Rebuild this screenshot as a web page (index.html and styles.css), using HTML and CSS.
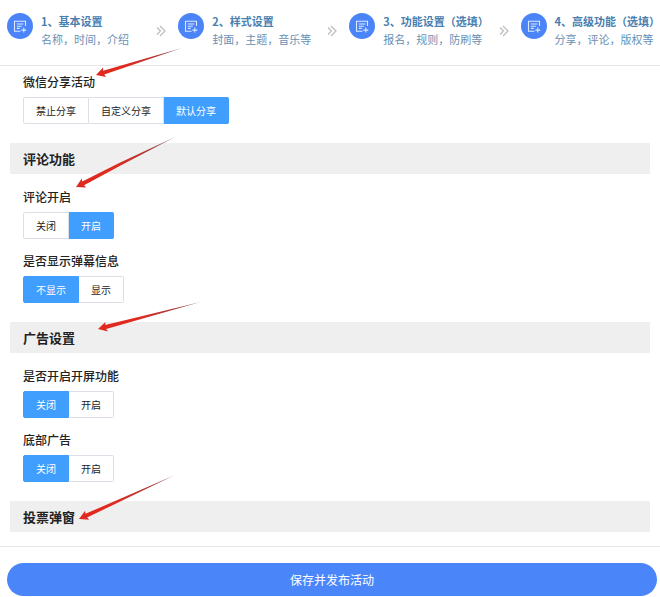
FILE: index.html
```html
<!DOCTYPE html>
<html lang="zh-CN">
<head>
    <meta charset="UTF-8">
    <meta name="viewport" content="width=device-width, initial-scale=1.0">
    <title>高级功能</title>
    <link rel="stylesheet" href="styles.css">
</head>
<body>

    <svg class="defs" width="0" height="0" aria-hidden="true">
        <symbol id="icon-form" viewBox="0 0 26 26">
            <path d="M18.5 13V8.2H7.5v10h6" />
            <path d="M9.8 11h6.6M9.8 13.2h5M9.8 15.4h3M16.8 14.6v5M14.3 17.1h5" />
        </symbol>
        <symbol id="icon-next" viewBox="0 0 10 12">
            <path d="M1 2.5l3.5 3.5L1 9.5M4 1l5 5-5 5" />
        </symbol>
    </svg>

    <nav class="steps">
        <a class="step" href="#">
            <svg class="step-icon"><use href="#icon-form"/></svg>
            <span class="step-text"><b>1、基本设置</b><span>名称，时间，介绍</span></span>
            <svg class="step-next"><use href="#icon-next"/></svg>
        </a>
        <a class="step" href="#">
            <svg class="step-icon"><use href="#icon-form"/></svg>
            <span class="step-text"><b>2、样式设置</b><span>封面，主题，音乐等</span></span>
            <svg class="step-next"><use href="#icon-next"/></svg>
        </a>
        <a class="step" href="#">
            <svg class="step-icon"><use href="#icon-form"/></svg>
            <span class="step-text"><b>3、功能设置（选填）</b><span>报名，规则，防刷等</span></span>
            <svg class="step-next"><use href="#icon-next"/></svg>
        </a>
        <a class="step step-last" href="#">
            <svg class="step-icon"><use href="#icon-form"/></svg>
            <span class="step-text"><b>4、高级功能（选填）</b><span>分享，评论，版权等</span></span>
        </a>
    </nav>

    <form class="form">
        <div class="group">
            <fieldset class="field">
                <legend>微信分享活动</legend>
                <div class="radios">
                    <label><input type="radio" name="share"><span>禁止分享</span></label>
                    <label><input type="radio" name="share"><span>自定义分享</span></label>
                    <label><input type="radio" name="share" checked><span>默认分享</span></label>
                </div>
            </fieldset>
        </div>

        <h2>评论功能</h2>
        <div class="group">
            <fieldset class="field">
                <legend>评论开启</legend>
                <div class="radios">
                    <label><input type="radio" name="comment"><span>关闭</span></label>
                    <label><input type="radio" name="comment" checked><span>开启</span></label>
                </div>
            </fieldset>
            <fieldset class="field">
                <legend>是否显示弹幕信息</legend>
                <div class="radios">
                    <label><input type="radio" name="danmu" checked><span>不显示</span></label>
                    <label><input type="radio" name="danmu"><span>显示</span></label>
                </div>
            </fieldset>
        </div>

        <h2>广告设置</h2>
        <div class="group">
            <fieldset class="field">
                <legend>是否开启开屏功能</legend>
                <div class="radios">
                    <label><input type="radio" name="splash" checked><span>关闭</span></label>
                    <label><input type="radio" name="splash"><span>开启</span></label>
                </div>
            </fieldset>
            <fieldset class="field">
                <legend>底部广告</legend>
                <div class="radios">
                    <label><input type="radio" name="bottom" checked><span>关闭</span></label>
                    <label><input type="radio" name="bottom"><span>开启</span></label>
                </div>
            </fieldset>
        </div>

        <h2>投票弹窗</h2>

        <div class="footer">
            <button type="submit" class="save">保存并发布活动</button>
        </div>
    </form>

    <!-- 指向各设置项的箭头 -->
    <svg class="arrows" width="210" height="530" aria-hidden="true">
        <defs>
            <linearGradient id="red" x1="0" x2="1">
                <stop offset="0.4" stop-color="#e02a20" />
                <stop offset="0.75" stop-color="#a83a38" />
                <stop offset="1" stop-color="#8a6a6a" />
            </linearGradient>
        </defs>
        <path transform="translate(96 75) rotate(-17.4)" d="M0 0L9-5 8-2 90 0 8 2 9 5z" />
        <path transform="translate(76 187) rotate(-26.8)" d="M0 0L9-5 8-2 50-2 111 0 50 1 8 2 9 5z" />
        <path transform="translate(98 329) rotate(-14.7)" d="M0 0L9-5 8-2 106 0 8 2 9 5z" />
        <path transform="translate(79 519) rotate(-24.6)" d="M0 0L9-5 8-2 105 0 8 2 9 5z" />
    </svg>

</body>
</html>
```
FILE: styles.css
```css
* {
    box-sizing: border-box;
}
body {
    margin: 0;
    position: relative;
    background-color: #fff;
    color: #222;
    font-family: "Noto Sans CJK SC", sans-serif;
    font-size: 12px;
    line-height: 16px;
}
.defs {
    display: block;
}

/* steps */
.steps {
    display: flex;
    height: 66px;
    padding: 12px 0 0 7px;
    border-bottom: 1px solid #e6e6e6;
}
.step {
    display: flex;
    flex: 1;
    align-items: flex-start;
    gap: 8px;
    color: #4a80b0;
    font-size: 11px;
    text-decoration: none;
}
.step-last {
    flex: none;
}
.step-icon {
    flex: none;
    width: 26px;
    height: 26px;
    margin-top: 1px;
    border-radius: 50%;
    background-color: #4a84f8;
    fill: none;
    stroke: #dce8ff;
    stroke-width: 1.1;
}
.step-text {
    display: flex;
    flex-direction: column;
    line-height: 18px;
    white-space: nowrap;
}
.step-text span {
    color: #6a90b4;
}
.step-next {
    flex: none;
    width: 10px;
    height: 12px;
    margin: 13px 12px 0 auto;
    fill: none;
    stroke: #bcbcbc;
    stroke-width: 1.2;
}

/* form */
.group {
    display: flex;
    flex-direction: column;
    gap: 14px;
    padding: 15px 23px 19px;
}
.steps + .form .group:first-child {
    padding-top: 8px;
}
.field {
    min-width: 0;
    margin: 0;
    padding: 0;
    border: 0;
}
.field legend {
    margin-bottom: 7px;
    padding: 0;
    font-weight: 500;
}
h2 {
    margin: 0 10px;
    padding: 0 13px;
    background-color: #efefef;
    font-size: 13px;
    font-weight: bold;
    line-height: 31px;
}

.radios {
    display: flex;
}
.radios label {
    position: relative;
    cursor: pointer;
}
.radios input {
    position: absolute;
    inset: 0;
    margin: 0;
    opacity: 0;
}
.radios span {
    display: block;
    padding: 0 12px;
    border: 1px solid #dcdfe6;
    border-left-width: 0;
    font-size: 10px;
    line-height: 25px;
}
.radios label:first-child span {
    border-left-width: 1px;
    border-radius: 2px 0 0 2px;
}
.radios label:last-child span {
    border-radius: 0 2px 2px 0;
}
.radios input:checked + span {
    border-color: #409eff;
    background-color: #409eff;
    color: #fff;
}

.footer {
    margin-top: 14px;
    padding: 16px 3px 1px 7px;
    border-top: 1px solid #e6e6e6;
}
.save {
    display: block;
    width: 100%;
    height: 33px;
    border: 0;
    border-radius: 17px;
    background-color: #4a86fa;
    color: #fff;
    font-family: inherit;
    font-size: 12px;
    cursor: pointer;
}

.arrows {
    position: absolute;
    top: 0;
    left: 0;
    fill: url(#red);
    pointer-events: none;
}
```
